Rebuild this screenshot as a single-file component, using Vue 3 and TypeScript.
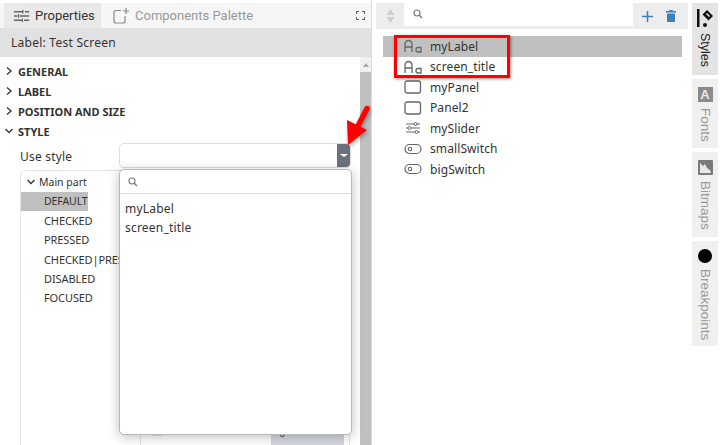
<script setup lang="ts">
const sections = [
  { name: 'GENERAL', open: false },
  { name: 'LABEL', open: false },
  { name: 'POSITION AND SIZE', open: false },
  { name: 'STYLE', open: true },
]
const states = ['DEFAULT', 'CHECKED', 'PRESSED', 'CHECKED|PRESSED', 'DISABLED', 'FOCUSED']
const options = ['myLabel', 'screen_title']
const styles = [
  { name: 'myLabel', kind: 'label' },
  { name: 'screen_title', kind: 'label' },
  { name: 'myPanel', kind: 'panel' },
  { name: 'Panel2', kind: 'panel' },
  { name: 'mySlider', kind: 'slider' },
  { name: 'smallSwitch', kind: 'switch' },
  { name: 'bigSwitch', kind: 'switch' },
]
</script>

<template>
  <div class="app">
    <section class="left">
      <header class="tabs">
        <div class="tab active">
          <svg width="17" height="14" viewBox="0 0 20 16" class="tab-ico">
            <path d="M1 3h10M14 3h5M1 8h4M8 8h11M1 13h9M13 13h6M11.5 1v4M6.500 6v4M11 11v4" stroke="#666" stroke-width="1.500" fill="none" />
          </svg>
          <span>Properties</span>
        </div>
        <div class="tab">
          <svg width="16" height="16" viewBox="0 0 16 16" class="tab-ico">
            <path d="M8 2.500H3a2 2 0 0 0-2 2V13a2 2 0 0 0 2 2h7a2 2 0 0 0 2-2V8M13 0v6M10 3h6" stroke="#8a8a8a" stroke-width="1.200" fill="none" />
          </svg>
          <span>Components Palette</span>
        </div>
        <svg class="expand" width="9" height="9" viewBox="0 0 9 9">
          <path d="M0.500 3V.5H3M6 .5h2.500V3M8.500 6v2.500H6M3 8.500H.5V6" stroke="#666" stroke-width="1.100" fill="none" />
        </svg>
      </header>
      <div class="title-bar">Label: Test Screen</div>
      <div class="body">
        <div class="content">
          <div v-for="s in sections" :key="s.name" class="section">
            <svg width="8" height="8" viewBox="0 0 8 8" class="chev">
              <path v-if="s.open" d="M.5 2l3.500 3.500L7.500 2" stroke="#333" stroke-width="1.300" fill="none" />
              <path v-else d="M2 .5L6 4 2 7.500" stroke="#333" stroke-width="1.300" fill="none" />
            </svg>
            <span>{{ s.name }}</span>
          </div>
          <div class="use-row">
            <span class="use-label">Use style</span>
            <div class="select">
              <div class="select-btn"><i class="caret"></i></div>
            </div>
          </div>
          <div class="parts">
            <div class="part-head">
              <svg width="8" height="8" viewBox="0 0 8 8"><path d="M.5 2l3.500 3.500L7.500 2" stroke="#333" stroke-width="1.300" fill="none" /></svg>
              <span>Main part</span>
            </div>
            <div v-for="(st, i) in states" :key="st" class="state" :class="{ on: i === 0 }"><span>{{ st }}</span></div>
            <div class="part-divider"></div>
            <div class="part-chip"></div>
            <div class="part-button">0</div>
          </div>
        </div>
        <div class="scrollbar">
          <i class="up"></i>
          <div class="thumb"></div>
        </div>
      </div>
      <div class="dropdown">
        <div class="dd-search">
          <svg width="10" height="10" viewBox="0 0 10 10"><circle cx="4" cy="4" r="3" stroke="#777" stroke-width="1.100" fill="none" /><path d="M6.300 6.300L9 9" stroke="#777" stroke-width="1.300" /></svg>
        </div>
        <div class="dd-list">
          <div v-for="o in options" :key="o">{{ o }}</div>
        </div>
      </div>
      <svg class="pointer" width="30" height="46" viewBox="0 0 30 46">
        <path d="M26 6.500L16 26" stroke="#f00" stroke-width="5.500" stroke-linecap="round" fill="none" />
        <path d="M6 18L26 28 7 43Z" fill="#f00" />
      </svg>
    </section>

    <section class="right">
      <div class="right-main">
        <header class="toolbar">
          <svg width="9" height="16" viewBox="0 0 9 16" class="sort"><path d="M4.500 1L8.500 7H.5ZM4.500 15L.5 9H8.500Z" fill="#cfcfcf" /></svg>
          <div class="search">
            <svg width="10" height="10" viewBox="0 0 10 10"><circle cx="4" cy="4" r="3" stroke="#777" stroke-width="1.100" fill="none" /><path d="M6.300 6.300L9 9" stroke="#777" stroke-width="1.300" /></svg>
          </div>
          <svg width="11" height="11" viewBox="0 0 11 11" class="plus"><path d="M5.500 0v11M0 5.500h11" stroke="#3d7fb8" stroke-width="1.500" /></svg>
          <svg width="10" height="12" viewBox="0 0 10 12" class="trash"><path d="M3.500 0h3l.5 1h3v1.500H0V1h3ZM1 3.500h8V11a1 1 0 0 1-1 1H2a1 1 0 0 1-1-1Z" fill="#3d7fb8" /></svg>
        </header>
        <div class="list">
          <div v-for="(s, i) in styles" :key="s.name" class="row" :class="{ sel: i === 0 }">
            <svg class="kind" width="18" height="14" viewBox="0 0 18 14">
              <template v-if="s.kind === 'label'">
                <path d="M1 13V5a3.500 3.500 0 0 1 7 0v8M1 8h7" stroke="#666" stroke-width="1.300" fill="none" />
                <path d="M17 8.500h-3a2 2 0 0 0-2 2v.5a2 2 0 0 0 2 2h3Z" stroke="#666" stroke-width="1.300" fill="none" />
              </template>
              <rect v-else-if="s.kind === 'panel'" x="1" y="1" width="15.500" height="12" rx="2" stroke="#666" stroke-width="1.300" fill="none" />
              <template v-else-if="s.kind === 'slider'">
                <path d="M2 3h8M13 3h3M2 7h2M7 7h9M2 11h9M14 11h2" stroke="#666" stroke-width="1.200" fill="none" />
                <circle cx="11.500" cy="3" r="1.500" stroke="#666" fill="none" />
                <circle cx="5.500" cy="7" r="1.500" stroke="#666" fill="none" />
                <circle cx="12.500" cy="11" r="1.500" stroke="#666" fill="none" />
              </template>
              <template v-else>
                <rect x="1" y="2.500" width="16" height="9" rx="4.500" stroke="#666" stroke-width="1.200" fill="none" />
                <circle cx="6" cy="7" r="1.700" stroke="#666" stroke-width="1.100" fill="none" />
              </template>
            </svg>
            <span>{{ s.name }}</span>
          </div>
          <div class="highlight"></div>
        </div>
      </div>
      <nav class="side">
        <div class="side-tab current t1">
          <svg width="17" height="18" viewBox="0 0 17 18">
            <rect x="0" y="0" width="2.500" height="18" fill="#111" />
            <path d="M10 1l6 6-4.500 4.500-6-6Z" fill="#111" />
            <circle cx="8" cy="16" r="2" fill="#111" />
            <path d="M9.500 4.500l3 3" stroke="#e4e4e4" stroke-width="1.500" />
          </svg>
          <span>Styles</span>
        </div>
        <div class="side-tab t2">
          <div class="badge-a">A</div>
          <span>Fonts</span>
        </div>
        <div class="side-tab t3">
          <svg width="15" height="15" viewBox="0 0 15 15"><rect width="15" height="15" rx="1" fill="#7a7a7a" /><path d="M2 13V3l3 3 2-2 1.500 3L10 9l2 1 1 3Z" fill="#e9e9e9" /></svg>
          <span>Bitmaps</span>
        </div>
        <div class="side-tab t4">
          <i class="dot"></i>
          <span>Breakpoints</span>
        </div>
      </nav>
    </section>
  </div>
</template>

<style scoped>
.app {
  width: 720px;
  height: 445px;
  display: flex;
  overflow: hidden;
  position: relative;
  background: #fff;
  font-family: "Noto Sans", "Open Sans", sans-serif;
  font-size: 12px;
  color: #333;
}
.left {
  position: relative;
  width: 371px;
  flex: none;
  display: flex;
  flex-direction: column;
  border-right: 1px solid #ddd;
  box-sizing: content-box;
}
.tabs {
  height: 25px;
  margin-top: 3px;
  flex: none;
  display: flex;
  align-items: stretch;
  padding-left: 4px;
  background: #f6f6f6;
  position: relative;
}
.tab {
  display: flex;
  align-items: center;
  gap: 5px;
  padding: 0 7px 0 9px;
  font-family: Roboto, sans-serif;
  font-size: 13px;
  color: #999;
}
.tab.active {
  background: #e9e9e9;
  color: #333;
  width: 97px;
  box-sizing: border-box;
  padding-left: 9px;
}
.tab-ico { flex: none; }
.tabs .tab + .tab { padding-left: 12px; gap: 6px; }
.expand {
  margin-left: auto;
  margin-right: 6px;
  align-self: center;
}
.title-bar {
  height: 29px;
  flex: none;
  box-sizing: border-box;
  background: #e1e1e1;
  padding-left: 11px;
  line-height: 29px;
  font-size: 12px;
  letter-spacing: 0.25px;
  color: #333;
}
.body {
  flex: 1;
  display: flex;
  min-height: 0;
}
.content {
  flex: 1;
  min-width: 0;
  padding-top: 4px;
  overflow: hidden;
}
.section {
  height: 20px;
  display: flex;
  align-items: center;
  padding-left: 5px;
  gap: 5px;
  font-size: 11px;
  font-weight: 700;
  color: #333;
}
.chev { flex: none; }
.use-row {
  display: flex;
  align-items: center;
  padding-left: 20px;
  margin-top: 1px;
  height: 27px;
}
.use-label {
  width: 99px;
  padding-top: 2px;
  font-size: 12px;
  letter-spacing: 0.2px;
}
.select {
  width: 232px;
  height: 25px;
  box-sizing: border-box;
  border: 1px solid #ddd;
  border-radius: 5px;
  display: flex;
  justify-content: flex-end;
  overflow: hidden;
}
.select-btn {
  width: 13px;
  background: #6a737d;
  display: flex;
  align-items: center;
  justify-content: center;
}
.caret {
  border: 4px solid transparent;
  border-top: 3px solid #fff;
  border-bottom: 0;
}
.parts {
  position: relative;
  margin: 1px 0 0 20px;
  width: 330px;
  height: 280px;
  border: 1px solid #e0e3e8;
  border-bottom: 0;
  border-radius: 5px 5px 0 0;
  box-sizing: border-box;
  padding-top: 1px;
}
.part-head {
  display: flex;
  align-items: center;
  height: 19px;
  padding-left: 6px;
  gap: 4px;
  font-size: 10.500px;
}
.state {
  height: 19.200px;
  font-size: 11px;
  letter-spacing: -0.1px;
  line-height: 19px;
  white-space: nowrap;
  overflow: hidden;
  padding-left: 23px;
}
.state.on {
  box-sizing: border-box;
  width: 67px;
  background: #c0c0c0;
  margin-top: 1px;
  overflow: visible;
  font-size: 10.500px;
}
.part-divider {
  position: absolute;
  left: 119px;
  top: 255px;
  bottom: 0;
  border-left: 1px solid #e0e3e8;
}
.part-chip {
  position: absolute;
  left: 131px;
  top: 255px;
  width: 11px;
  height: 10px;
  background: #e2e2e2;
  border-radius: 2px;
}
.part-button {
  position: absolute;
  left: 250px;
  top: 255px;
  width: 73px;
  bottom: 1px;
  box-sizing: border-box;
  padding-left: 8px;
  font-size: 11px;
  line-height: 14px;
  color: #456;
  background: #d5d8de;
  border-radius: 0 0 4px 4px;
}
.scrollbar {
  width: 11px;
  flex: none;
  background: #f1f1f1;
  position: relative;
}
.up {
  display: block;
  margin: 6px auto 0;
  width: 0;
  border: 3.500px solid transparent;
  border-bottom: 4px solid #a8a8a8;
  border-top: 0;
}
.thumb {
  position: absolute;
  top: 15px;
  left: 0;
  right: 0;
  bottom: 0;
  background: #c0c0c0;
}
.dropdown {
  position: absolute;
  left: 119px;
  top: 169px;
  width: 233px;
  height: 266px;
  box-sizing: border-box;
  background: #fff;
  border: 1px solid #b8b8b8;
  border-radius: 5px;
  box-shadow: 0 2px 12px rgba(0, 0, 0, 0.25);
}
.dd-search {
  height: 24px;
  box-sizing: border-box;
  border-bottom: 1px solid #ddd;
  padding: 7px 0 0 8px;
  line-height: 0;
}
.dd-list {
  padding: 5px 0 0 5px;
  font-size: 12px;
  letter-spacing: 0.2px;
  line-height: 19px;
}
.pointer {
  position: absolute;
  left: 341px;
  top: 102px;
  filter: drop-shadow(1px 2px 2px rgba(0, 0, 0, 0.35));
}
.right {
  flex: 1;
  display: flex;
  min-width: 0;
  margin-left: 4px;
}
.right-main {
  width: 312px;
  flex: none;
  display: flex;
  flex-direction: column;
}
.toolbar {
  height: 26px;
  margin-top: 3px;
  flex: none;
  background: #ededed;
  display: flex;
  align-items: center;
  padding-left: 10px;
}
.sort { flex: none; }
.search {
  width: 229px;
  height: 23px;
  margin: 0 0 3px 9px;
  background: #fff;
  box-sizing: border-box;
  padding: 6px 0 0 9px;
  line-height: 0;
}
.plus { margin-left: 9px; }
.trash { margin-left: 13px; }
.list {
  position: relative;
  padding: 7px 6px 0 7px;
}
.row {
  height: 20.500px;
  display: flex;
  align-items: center;
  font-size: 12px;
  padding-left: 21px;
  gap: 8px;
  letter-spacing: 0.1px;
}
.row.sel { background: #c0c0c0; }
.kind { flex: none; }
.highlight {
  position: absolute;
  left: 18px;
  top: 6px;
  width: 116px;
  height: 43px;
  box-sizing: border-box;
  border: 3px solid #f00;
  box-shadow: 1px 1px 3px rgba(0, 0, 0, 0.45);
}
.side {
  width: 26px;
  flex: none;
  margin-left: 4px;
  padding-top: 3px;
  display: flex;
  flex-direction: column;
  gap: 4px;
}
.side-tab {
  background: #f0f0f0;
  display: flex;
  flex-direction: column;
  align-items: center;
  padding-top: 8px;
  gap: 6px;
  box-sizing: border-box;
  font-family: "Liberation Sans", sans-serif;
  font-size: 13.500px;
  color: #999;
}
.side-tab span {
  writing-mode: vertical-rl;
}
.side-tab.current {
  background: #e4e4e4;
  color: #222;
  padding-top: 6px;
  font-size: 12.500px;
}
.t1 { height: 72px; }
.t2 { height: 69px; }
.t3 { height: 85px; }
.t4 { height: 105px; }
.badge-a {
  width: 15px;
  height: 15px;
  background: #8a8a8a;
  color: #e9e9e9;
  font-family: "Liberation Sans", sans-serif;
  font-weight: 700;
  font-size: 13px;
  line-height: 15px;
  text-align: center;
}
.dot {
  display: block;
  width: 14px;
  height: 14px;
  border-radius: 50%;
  background: #000;
}
</style>
